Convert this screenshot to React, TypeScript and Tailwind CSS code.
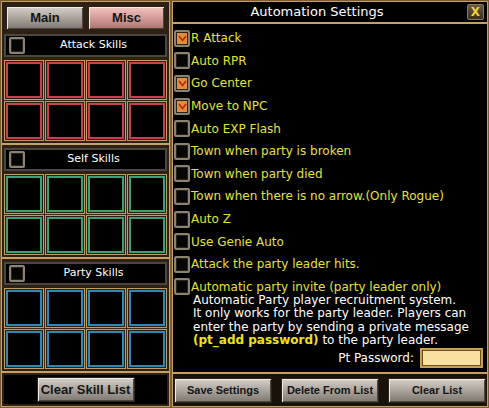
import React from 'react';

const font = { fontFamily: '"DejaVu Sans", Verdana, sans-serif' };
const btnFont = { fontFamily: '"Liberation Sans", Arial, sans-serif' };

const CheckBox = ({ checked = false }: { checked?: boolean }) => (
  <div className="w-[16px] h-[17px] shrink-0 rounded-[2px] border-2 border-[#8c8272] bg-[#050505] shadow-[inset_0_0_0_1px_#2a241c] flex items-center justify-center">
    {checked && (
      <div className="w-[10px] h-[11px] bg-[#e0903c] flex items-center justify-center">
        <svg width="9" height="8" viewBox="0 0 9 8">
          <path d="M1 2 L4.5 6.5 L8 2" stroke="#c02010" strokeWidth="1.6" fill="none" />
        </svg>
      </div>
    )}
  </div>
);

const GameButton = ({ label, className = '' }: { label: string; className?: string }) => (
  <div
    style={btnFont}
    className={`shrink-0 whitespace-nowrap flex items-center justify-center border border-[#2a241e] bg-gradient-to-b from-[#d6d0ca] via-[#aaa49c] to-[#7e7870] shadow-[inset_1px_1px_0_#f0ebe4,inset_-1px_-1px_0_#4c463e] font-bold text-[#141414] ${className}`}
  >
    {label}
  </div>
);

const SkillSection = ({ title, color }: { title: string; color: string }) => (
  <div className="flex flex-col">
    <div className="h-[23px] mx-[2px] border-2 border-[#4a4640] bg-black flex items-center px-[3px]">
      <CheckBox />
      <div className="flex-1 text-center text-white text-[11px]">{title}</div>
    </div>
    <div className="grid grid-cols-4 gap-[1px] mx-[2px] mt-[3px] bg-[#3a2a16]">
      {Array.from({ length: 8 }).map((_, i) => (
        <div key={i} className="h-[40px] border border-[#c09c60] bg-[#2a1e10] p-[1px]">
          <div className={`w-full h-full border-2 bg-black ${color}`} />
        </div>
      ))}
    </div>
  </div>
);

const options: { label: string; checked?: boolean }[] = [
  { label: 'R Attack', checked: true },
  { label: 'Auto RPR' },
  { label: 'Go Center', checked: true },
  { label: 'Move to NPC', checked: true },
  { label: 'Auto EXP Flash' },
  { label: 'Town when party is broken' },
  { label: 'Town when party died' },
  { label: 'Town when there is no arrow.(Only Rogue)' },
  { label: 'Auto Z' },
  { label: 'Use Genie Auto' },
  { label: 'Attack the party leader hits.' },
  { label: 'Automatic party invite (party leader only)' },
];

export default function App() {
  return (
    <div style={font} className="w-[489px] h-[408px] bg-[#7a5c32] flex p-[1px] gap-[2px] overflow-hidden">
      {/* left panel */}
      <div className="w-[169px] shrink-0 h-full flex flex-col border border-[#c8a064] bg-[#2e2114]">
        <div className="flex gap-[4px] px-[4px] pt-[4px]">
          <GameButton label="Main" className="w-[78px] h-[24px] text-[13px]" />
          <div
            style={btnFont}
            className="w-[77px] h-[24px] flex items-center justify-center border border-[#2a241e] bg-gradient-to-b from-[#f2c4c0] via-[#d49c98] to-[#a87470] shadow-[inset_1px_1px_0_#ffe4e0,inset_-1px_-1px_0_#5a3c38] font-bold text-[13px] text-[#141414]"
          >
            Misc
          </div>
        </div>
        <div className="mt-[4px]">
          <SkillSection title="Attack Skills" color="border-[#c8404e]" />
        </div>
        <div className="h-[2px] bg-[#c8a064] mt-[2px]" />
        <div className="mt-[3px]">
          <SkillSection title="Self Skills" color="border-[#3aa07a]" />
        </div>
        <div className="h-[2px] bg-[#c8a064] mt-[2px]" />
        <div className="mt-[3px]">
          <SkillSection title="Party Skills" color="border-[#2c88b8]" />
        </div>
        <div className="h-[2px] bg-[#c8a064] mt-[2px]" />
        <div className="flex-1 mx-[2px] my-[2px] bg-black flex items-center justify-center">
          <GameButton label="Clear Skill List" className="w-[98px] h-[25px] text-[13px]" />
        </div>
      </div>

      {/* right panel */}
      <div className="flex-1 h-full flex flex-col border border-[#c8a064] bg-[#2e2114]">
        <div className="h-[20px] bg-black flex items-center relative">
          <div className="flex-1 text-center text-white text-[13px] pr-[26px]">Automation Settings</div>
          <div className="absolute right-[3px] top-[2px] w-[17px] h-[16px] rounded-[2px] border border-[#8a7a5a] bg-gradient-to-b from-[#6a5a40] to-[#3a2e20] flex items-center justify-center text-[#f0d040] font-bold text-[12px]">
            X
          </div>
        </div>
        <div className="h-[2px] bg-[#c8a064]" />
        <div className="flex-1 bg-black px-[1px] pt-[3px]">
          <div className="flex flex-col">
            {options.map((o) => (
              <div key={o.label} className="h-[22.6px] flex items-center gap-[1px]">
                <CheckBox checked={o.checked} />
                <span className="text-[12px] text-[#e4e03c] leading-none">{o.label}</span>
              </div>
            ))}
          </div>
          <div className="pl-[19px] text-white text-[12px] leading-[13.3px] -mt-[4px]">
            <div>Automatic Party player recruitment system.</div>
            <div>It only works for the party leader. Players can</div>
            <div>enter the party by sending a private message</div>
            <div>
              <span className="font-bold text-[#f0e020]">(pt_add password)</span> to the party leader.
            </div>
          </div>
          <div className="flex items-center justify-end gap-[6px] pr-[3px] mt-[1px]">
            <span className="text-white text-[12px]">Pt Password:</span>
            <div className="w-[63px] h-[20px] border-2 border-[#c8a050] bg-[#f8e0a0] shadow-[inset_0_0_0_1px_#6a5020]" />
          </div>
        </div>
        <div className="h-[2px] bg-[#c8a064]" />
        <div className="h-[32px] flex items-center justify-between px-[1px] bg-[#1a1208]">
          <GameButton label="Save Settings" className="w-[98px] h-[25px] text-[11px]" />
          <GameButton label="Delete From List" className="w-[98px] h-[25px] text-[11px]" />
          <GameButton label="Clear List" className="w-[98px] h-[25px] text-[11px]" />
        </div>
      </div>
    </div>
  );
}
